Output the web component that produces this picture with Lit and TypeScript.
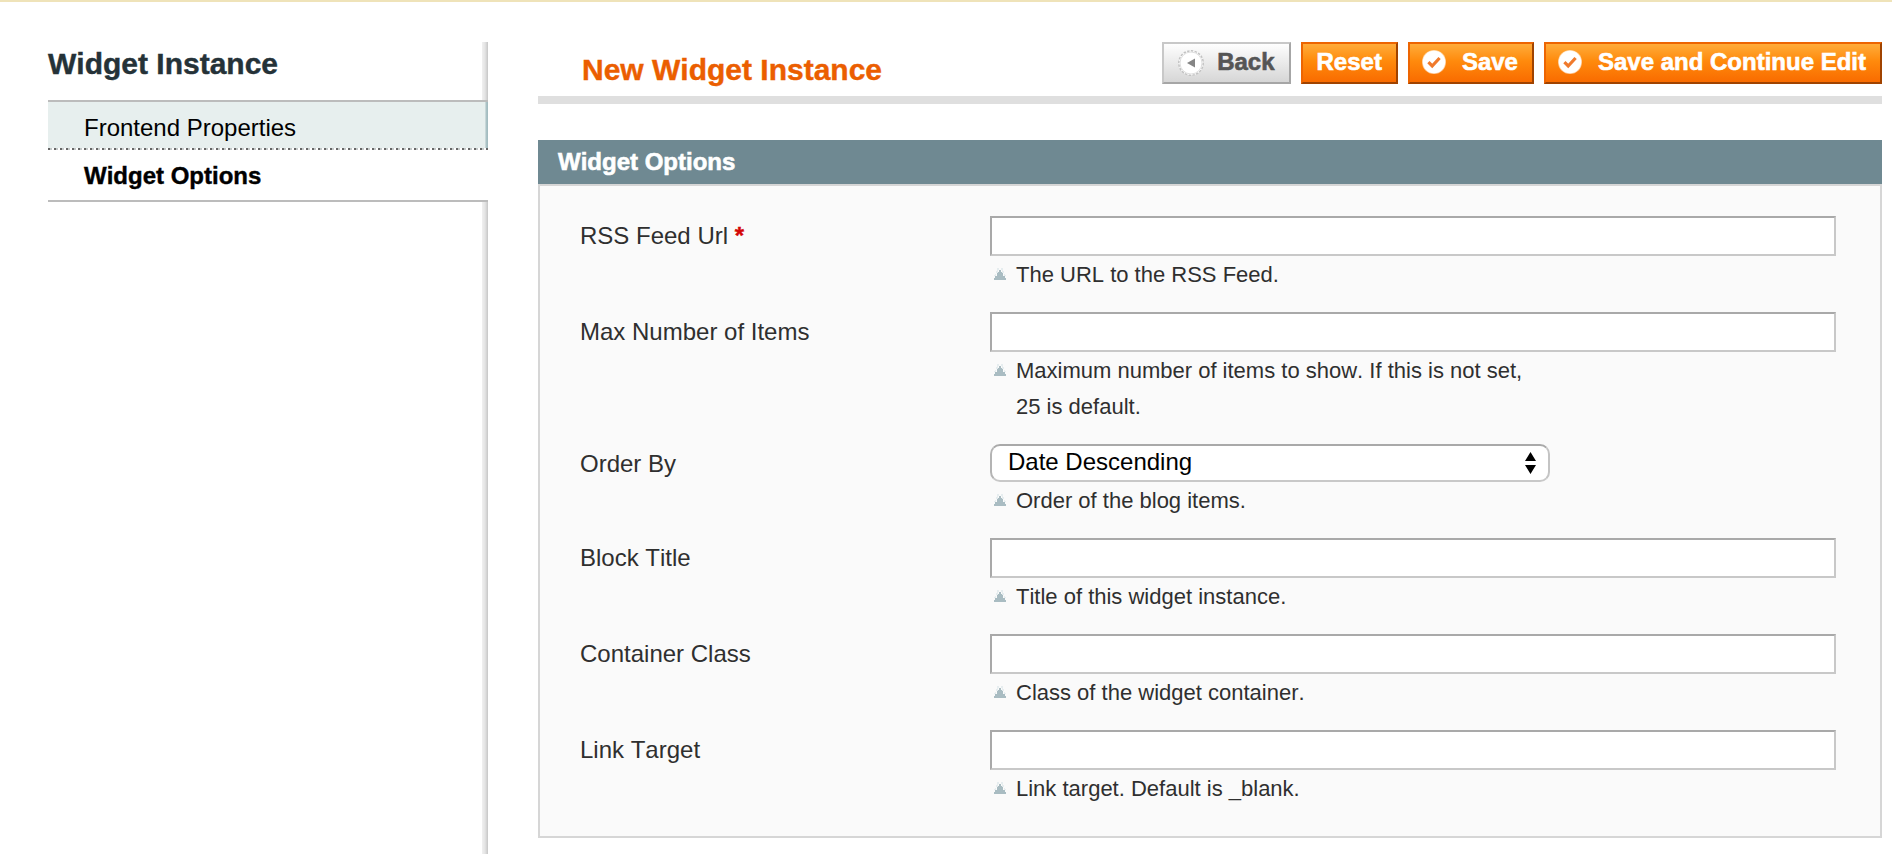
import { LitElement, html, css, svg, nothing } from "lit";
import { customElement, property } from "lit/decorators.js";

type Field = { label: string; hint: string; required?: boolean; value?: string };

const FIELDS: Field[] = [
  { label: "RSS Feed Url", hint: "The URL to the RSS Feed.", required: true },
  { label: "Max Number of Items", hint: "Maximum number of items to show. If this is not set, 25 is default." },
  { label: "Order By", hint: "Order of the blog items.", value: "Date Descending" },
  { label: "Block Title", hint: "Title of this widget instance." },
  { label: "Container Class", hint: "Class of the widget container." },
  { label: "Link Target", hint: "Link target. Default is _blank." },
];

const backIcon = svg`
  <circle cx="13" cy="13" r="12.2" fill="#fff" stroke="#c2c2c2" stroke-width="1.5" stroke-dasharray="2.4 1.4"/>
  <circle cx="13" cy="13" r="11" fill="#fff" stroke="#dedede" stroke-width="1"/>
  <path d="M17 8.4V17.6L9 13Z" fill="#858585"/>`;

const saveIcon = svg`
  <circle cx="13" cy="12" r="12" fill="#fff" opacity=".6"/>
  <circle cx="13" cy="12" r="11.2" fill="#fff"/>
  <path d="M7.4 12.2L11.2 16L18.6 8" fill="none" stroke="#f07a2c" stroke-width="3.2"/>`;

@customElement("form-button")
export class FormButton extends LitElement {
  @property() label = "";
  @property() icon = "";

  static styles = css`
    :host { display: block; }
    .button {
      box-sizing: border-box;
      height: 42px;
      display: flex;
      align-items: flex-start;
      padding: 0 14px;
      margin: 0;
      border: 2px solid;
      border-color: #ed6502 #a04300 #a04300 #ed6502;
      background: linear-gradient(#ffac3a, #ff8a0c 45%, #f96b00);
      color: #fff;
      font: bold 24px/36px "Liberation Sans", Arial, sans-serif;
      font-kerning: none;
      -webkit-text-stroke: 0.6px;
      white-space: nowrap;
    }
    .button.back {
      border-color: #c8c8c8 #a6a6a6 #a6a6a6 #c8c8c8;
      background: linear-gradient(#fefefe, #d6d6d6);
      color: #555;
    }
    .glyph { width: 26px; height: 26px; margin: 6px 15px 0 0; flex: none; }
    .back .glyph { margin-right: 13px; }
    .button.save { padding-left: 11px; }
  `;

  render() {
    return html`<button class="button ${this.icon}">
      ${this.icon
        ? html`<svg class="glyph" viewBox="0 0 26 26">${this.icon === "back" ? backIcon : saveIcon}</svg>`
        : nothing}<span>${this.label}</span>
    </button>`;
  }
}

@customElement("side-nav")
export class SideNav extends LitElement {
  static styles = css`
    :host {
      display: block;
      width: 440px;
      flex: none;
      font-family: "Liberation Sans", Arial, sans-serif;
      background: linear-gradient(90deg, #f0f0f0, #e4e4e4 50%, #c6c6c6) right / 6px 100% no-repeat;
    }
    .title {
      margin: 0;
      height: 58px;
      font-size: 30px;
      line-height: 44px;
      color: #253238;
      -webkit-text-stroke: 0.4px;
    }
    .tabs { border: solid #bcbcbc; border-width: 2px 0; }
    .tab {
      box-sizing: border-box;
      padding-left: 36px;
      font-size: 24px;
      color: #000;
    }
    .link {
      height: 48px;
      line-height: 51px;
      background:
        repeating-linear-gradient(90deg, #666 0 2px, #c3c8c8 2px 4px, #fff 4px 6px) bottom / 100% 2px no-repeat,
        linear-gradient(90deg, #d5e1e1, #a3bcc0 60%) right / 3px 100% no-repeat,
        #e7efee;
    }
    .active {
      height: 50px;
      line-height: 52px;
      font-weight: bold;
      background: #fff;
      -webkit-text-stroke: 0.4px;
    }
  `;

  render() {
    return html`
      <h3 class="title">Widget Instance</h3>
      <div class="tabs">
        <div class="tab link">Frontend Properties</div>
        <div class="tab active">Widget Options</div>
      </div>
    `;
  }
}

@customElement("option-row")
export class OptionRow extends LitElement {
  @property({ attribute: false }) field!: Field;

  static styles = css`
    :host { display: flex; font-family: "Liberation Sans", Arial, sans-serif; font-kerning: none; color: #2f2f2f; }
    .label { width: 410px; flex: none; font-size: 24px; line-height: 40px; }
    .required { color: #d40707; font-weight: bold; -webkit-text-stroke: 0.4px; }
    .control { flex: 1; }
    .input {
      box-sizing: border-box;
      display: block;
      width: 100%;
      height: 40px;
      margin: 0;
      padding: 0 6px;
      border: 2px solid;
      border-color: #a9a9a9 #c8c8c8 #c8c8c8 #a9a9a9;
      border-radius: 0;
      background: #fff;
      font: 24px "Liberation Sans", Arial, sans-serif;
    }
    .select {
      box-sizing: border-box;
      width: 560px;
      height: 38px;
      display: flex;
      justify-content: space-between;
      padding: 0 12px 0 16px;
      border: 2px solid;
      border-color: #a9a9a9 #c4c4c4 #c8c8c8 #b4b4b4;
      border-radius: 10px;
      background: #fff;
      color: #000;
      font-size: 24px;
      line-height: 31px;
    }
    .arrows { width: 11px; height: 22px; margin-top: 6px; }
    .hint {
      display: flex;
      width: 560px;
      padding-top: 1px;
      margin-bottom: -1px;
      font-size: 22px;
      line-height: 36px;
    }
    .marker { width: 14px; height: 12px; margin: 11px 9px 0 3px; flex: none; }
  `;

  render() {
    const f = this.field;
    return html`
      <div class="label">${f.label}${f.required ? html` <span class="required">*</span>` : nothing}</div>
      <div class="control">
        ${f.value
          ? html`<div class="select">
              <span>${f.value}</span>
              <svg class="arrows" viewBox="0 0 11 22"><path d="M5.5 0L11 9H0ZM5.5 22L11 13H0Z" /></svg>
            </div>`
          : html`<input class="input" type="text" />`}
        <div class="hint">
          <svg class="marker" viewBox="0 0 14 12">
            <path d="M6 2H8V4H9V5H10V8H12V10H13V12H1V10H2V8H4V5H5V4H6Z" fill="#a9bcc2" />
            <path d="M4 0H6V2H5V5H3V3H4ZM8 0H10V3H11V5H9V2H8ZM2 6H3V8H1V7H2ZM11 6H12V7H13V8H11Z" fill="#e6edef" />
          </svg>
          <span>${f.hint}</span>
        </div>
      </div>
    `;
  }
}

@customElement("app-root")
export class AppRoot extends LitElement {
  static styles = css`
    :host {
      box-sizing: border-box;
      display: flex;
      gap: 50px;
      height: 854px;
      padding: 40px 10px 0 48px;
      border-top: 2px solid #efe3b9;
      background: #fff;
      overflow: hidden;
      font-family: "Liberation Sans", Arial, sans-serif;
      font-kerning: none;
    }
    .main { flex: 1; }
    .header {
      display: flex;
      justify-content: space-between;
      height: 54px;
      padding-left: 44px;
      border-bottom: 8px solid #dfdfdf;
      margin-bottom: 36px;
    }
    .title { margin: 0; font-size: 30px; line-height: 56px; color: #eb5e00; -webkit-text-stroke: 0.4px; }
    .actions { display: flex; gap: 10px; }
    .legend {
      margin: 0;
      height: 44px;
      padding-left: 20px;
      background: #6f8992;
      color: #fff;
      font-size: 24px;
      line-height: 43px;
      -webkit-text-stroke: 0.6px;
    }
    .panel {
      box-sizing: border-box;
      height: 654px;
      display: flex;
      flex-direction: column;
      gap: 20px;
      padding: 30px 44px 0 40px;
      border: 2px solid #d6d6d6;
      background: #fafafa;
    }
  `;

  render() {
    return html`
      <side-nav></side-nav>
      <div class="main">
        <div class="header">
          <h3 class="title">New Widget Instance</h3>
          <div class="actions">
            <form-button icon="back" label="Back"></form-button>
            <form-button label="Reset"></form-button>
            <form-button icon="save" label="Save"></form-button>
            <form-button icon="save" label="Save and Continue Edit"></form-button>
          </div>
        </div>
        <h4 class="legend">Widget Options</h4>
        <div class="panel">${FIELDS.map((f) => html`<option-row .field=${f}></option-row>`)}</div>
      </div>
    `;
  }
}
